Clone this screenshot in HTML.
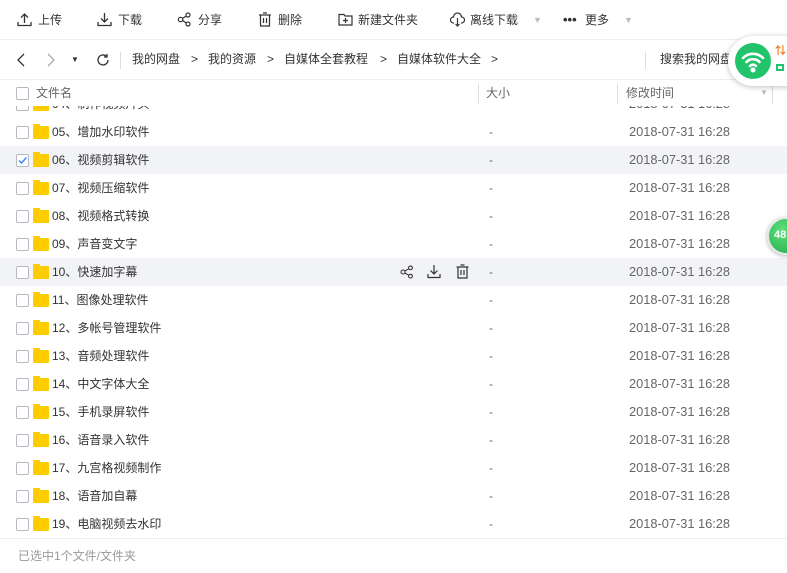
<!DOCTYPE html>
<html><head><meta charset="utf-8"><style>
*{margin:0;padding:0;box-sizing:border-box}
body{width:787px;height:572px;overflow:hidden;background:#fff;font-family:"Liberation Sans","Noto Sans CJK SC",sans-serif;font-size:12px;color:#424e67;position:relative}
.tb{position:absolute;top:0;left:0;width:787px;height:40px;border-bottom:1px solid #eceef2}
.tb span{position:absolute;top:0;font-size:12px;color:#333;line-height:40px}
.tb svg{position:absolute;top:12px}
.nav{position:absolute;top:40px;left:0;width:787px;height:40px;border-bottom:1px solid #eceef2}
.nav .t{position:absolute;top:0;line-height:39px;color:#333;font-size:12px}
.hd{position:absolute;top:80px;left:0;width:787px;height:26px}
.hd .t{position:absolute;top:0;line-height:26px;color:#666;font-size:12px}
.sep{position:absolute;width:1px;background:#ddd}
.cb{position:absolute;width:13px;height:13px;border:1px solid #b6b9bf;border-radius:2px;background:#fff}
.list{position:absolute;top:104px;left:0;width:787px;height:434px;overflow:hidden}
.row{position:absolute;left:0;width:787px;height:28px}
.row.hl{background:#f2f3f7}
.fold{position:absolute;left:33px;top:8px;width:16px;height:13px;background:#ffcc00;border-radius:1px}
.fold:before{content:"";position:absolute;left:0;top:-2px;width:7px;height:3px;background:#ffcc00;border-radius:1px 1px 0 0}
.nm,.sz,.dt{position:absolute;top:0;line-height:28px}
.nm{left:52px;color:#333}
.sz{left:489px;color:#666}
.dt{left:629px;color:#666;font-size:12.8px}
.ft{position:absolute;top:538px;left:0;width:787px;height:34px;border-top:1px solid #eceef2}
</style></head><body>
<div class="tb">
<svg style="left:17px" width="15" height="15" viewBox="0 0 15 15" fill="none" stroke="#333" stroke-width="1.3"><path d="M1 10v3.5h13V10M7.5 11V2M4 5.5l3.5-3.5 3.5 3.5"/></svg><span style="left:38px">上传</span>
<svg style="left:97px" width="15" height="15" viewBox="0 0 15 15" fill="none" stroke="#333" stroke-width="1.3"><path d="M1 10v3.5h13V10M7.5 1v9M4 6.5l3.5 3.5 3.5-3.5"/></svg><span style="left:118px">下载</span>
<svg style="left:177px" width="15" height="15" viewBox="0 0 15 15" fill="none" stroke="#333" stroke-width="1.2"><circle cx="3.5" cy="7.5" r="2.2"/><circle cx="11" cy="3" r="2"/><circle cx="11" cy="12" r="2"/><path d="M5.5 6.5l3.7-2.5M5.5 8.5l3.7 2.5"/></svg><span style="left:198px">分享</span>
<svg style="left:258px" width="14" height="15" viewBox="0 0 14 15" fill="none" stroke="#333" stroke-width="1.2"><path d="M1 3h12M5 1h4M2.5 3v11h9V3M5.5 6v5M8.5 6v5"/></svg><span style="left:278px">删除</span>
<svg style="left:338px" width="15" height="15" viewBox="0 0 15 15" fill="none" stroke="#333" stroke-width="1.2"><path d="M1 2.5h5l1 1.5h7v9H1zM7.5 6v5M5 8.5h5"/></svg><span style="left:358px">新建文件夹</span>
<svg style="left:450px" width="15" height="15" viewBox="0 0 15 15" fill="none" stroke="#333" stroke-width="1.2"><path d="M4 11H3.5a3 3 0 0 1 0-6 4 4 0 0 1 8 0 3 3 0 0 1 0 6H11M7.5 6v8M5.5 12l2 2 2-2"/></svg><span style="left:470px">离线下载</span>
<span style="left:533px;color:#bbb;font-size:9px">▼</span>
<span style="left:563px;font-weight:bold;font-size:13px">•••</span><span style="left:585px">更多</span>
<span style="left:624px;color:#bbb;font-size:9px">▼</span>
</div>
<div class="nav">
<svg style="position:absolute;left:16px;top:13px" width="10" height="14" viewBox="0 0 10 14" fill="none" stroke="#333" stroke-width="1.3"><path d="M8 1L2 7l6 6"/></svg>
<svg style="position:absolute;left:46px;top:13px" width="10" height="14" viewBox="0 0 10 14" fill="none" stroke="#aaa" stroke-width="1.3"><path d="M2 1l6 6-6 6"/></svg>
<span class="t" style="left:71px;font-size:8px">▼</span>
<svg style="position:absolute;left:96px;top:13px" width="14" height="14" viewBox="0 0 14 14" fill="none" stroke="#333" stroke-width="1.3"><path d="M12 7a5 5 0 1 1-1.5-3.6M11 1v3h-3"/></svg>
<div class="sep" style="left:120px;top:12px;height:17px"></div>
<span class="t" style="left:132px">我的网盘</span><span class="t" style="left:191px">&gt;</span>
<span class="t" style="left:208px">我的资源</span><span class="t" style="left:267px">&gt;</span>
<span class="t" style="left:284px">自媒体全套教程</span><span class="t" style="left:380px">&gt;</span>
<span class="t" style="left:397px">自媒体软件大全</span><span class="t" style="left:491px">&gt;</span>
<div class="sep" style="left:645px;top:12px;height:17px"></div>
<span class="t" style="left:660px">搜索我的网盘</span>
</div>
<div class="hd">
<div class="cb" style="left:16px;top:7px"></div>
<span class="t" style="left:36px">文件名</span>
<div class="sep" style="left:478px;top:4px;height:20px"></div>
<span class="t" style="left:486px">大小</span>
<div class="sep" style="left:617px;top:4px;height:20px"></div>
<span class="t" style="left:626px">修改时间</span>
<span class="t" style="left:760px;color:#bbb;font-size:8px">▼</span>
<div class="sep" style="left:772px;top:4px;height:20px"></div>
</div>
<div class="list" style="top:106px">
<div class="row" style="top:-16px"><div class="cb" style="left:16px;top:8px"></div><div class="fold"></div><span class="nm">04、制作视频片头</span><span class="sz">-</span><span class="dt">2018-07-31 16:28</span></div>
<div class="row" style="top:12px"><div class="cb" style="left:16px;top:8px"></div><div class="fold"></div><span class="nm">05、增加水印软件</span><span class="sz">-</span><span class="dt">2018-07-31 16:28</span></div>
<div class="row hl" style="top:40px"><div class="cb" style="left:16px;top:8px"><svg width="11" height="11" viewBox="0 0 11 11" style="position:absolute;left:0;top:0" fill="none" stroke="#3b8cff" stroke-width="1.5"><path d="M2 5.5l2.5 2.5 5-5.5"/></svg></div><div class="fold"></div><span class="nm">06、视频剪辑软件</span><span class="sz">-</span><span class="dt">2018-07-31 16:28</span></div>
<div class="row" style="top:68px"><div class="cb" style="left:16px;top:8px"></div><div class="fold"></div><span class="nm">07、视频压缩软件</span><span class="sz">-</span><span class="dt">2018-07-31 16:28</span></div>
<div class="row" style="top:96px"><div class="cb" style="left:16px;top:8px"></div><div class="fold"></div><span class="nm">08、视频格式转换</span><span class="sz">-</span><span class="dt">2018-07-31 16:28</span></div>
<div class="row" style="top:124px"><div class="cb" style="left:16px;top:8px"></div><div class="fold"></div><span class="nm">09、声音变文字</span><span class="sz">-</span><span class="dt">2018-07-31 16:28</span></div>
<div class="row hl" style="top:152px"><div class="cb" style="left:16px;top:8px"></div><div class="fold"></div><span class="nm">10、快速加字幕</span><span class="sz">-</span><span class="dt">2018-07-31 16:28</span>
<svg style="position:absolute;left:400px;top:7px" width="14" height="14" viewBox="0 0 14 14" fill="none" stroke="#333" stroke-width="1.1"><circle cx="3" cy="7" r="2"/><circle cx="10.5" cy="2.8" r="1.9"/><circle cx="10.5" cy="11.2" r="1.9"/><path d="M4.8 6l4-2.2M4.8 8l4 2.2"/></svg>
<svg style="position:absolute;left:427px;top:6px" width="14" height="15" viewBox="0 0 14 15" fill="none" stroke="#333" stroke-width="1.2"><path d="M1 10v3.5h12V10M7 1v9M3.5 6.5L7 10l3.5-3.5"/></svg>
<svg style="position:absolute;left:456px;top:6px" width="13" height="15" viewBox="0 0 13 15" fill="none" stroke="#333" stroke-width="1.2"><path d="M0.5 3h12M4.5 1h4M2 3v11h9V3M5 6v5M8 6v5"/></svg>
</div>
<div class="row" style="top:180px"><div class="cb" style="left:16px;top:8px"></div><div class="fold"></div><span class="nm">11、图像处理软件</span><span class="sz">-</span><span class="dt">2018-07-31 16:28</span></div>
<div class="row" style="top:208px"><div class="cb" style="left:16px;top:8px"></div><div class="fold"></div><span class="nm">12、多帐号管理软件</span><span class="sz">-</span><span class="dt">2018-07-31 16:28</span></div>
<div class="row" style="top:236px"><div class="cb" style="left:16px;top:8px"></div><div class="fold"></div><span class="nm">13、音频处理软件</span><span class="sz">-</span><span class="dt">2018-07-31 16:28</span></div>
<div class="row" style="top:264px"><div class="cb" style="left:16px;top:8px"></div><div class="fold"></div><span class="nm">14、中文字体大全</span><span class="sz">-</span><span class="dt">2018-07-31 16:28</span></div>
<div class="row" style="top:292px"><div class="cb" style="left:16px;top:8px"></div><div class="fold"></div><span class="nm">15、手机录屏软件</span><span class="sz">-</span><span class="dt">2018-07-31 16:28</span></div>
<div class="row" style="top:320px"><div class="cb" style="left:16px;top:8px"></div><div class="fold"></div><span class="nm">16、语音录入软件</span><span class="sz">-</span><span class="dt">2018-07-31 16:28</span></div>
<div class="row" style="top:348px"><div class="cb" style="left:16px;top:8px"></div><div class="fold"></div><span class="nm">17、九宫格视频制作</span><span class="sz">-</span><span class="dt">2018-07-31 16:28</span></div>
<div class="row" style="top:376px"><div class="cb" style="left:16px;top:8px"></div><div class="fold"></div><span class="nm">18、语音加自幕</span><span class="sz">-</span><span class="dt">2018-07-31 16:28</span></div>
<div class="row" style="top:404px"><div class="cb" style="left:16px;top:8px"></div><div class="fold"></div><span class="nm">19、电脑视频去水印</span><span class="sz">-</span><span class="dt">2018-07-31 16:28</span></div>
</div>
<div class="ft"><span style="position:absolute;left:18px;top:0;line-height:34px;color:#999">已选中1个文件/文件夹</span></div>
<div style="position:absolute;left:728px;top:36px;width:90px;height:50px;border-radius:25px;background:#fff;box-shadow:0 1px 6px rgba(0,0,0,.25)">
<div style="position:absolute;left:7px;top:7px;width:36px;height:36px;border-radius:50%;background:#22c46b">
<svg width="36" height="36" viewBox="0 0 36 36" fill="none" stroke="#fff" stroke-width="2.6" stroke-linecap="round"><path d="M8 15a14 14 0 0 1 20 0M11.5 19a9 9 0 0 1 13 0M15 23a4 4 0 0 1 6 0"/><circle cx="18" cy="27" r="1.2" fill="#fff"/></svg></div>
<span style="position:absolute;left:47px;top:6px;color:#f07b1e;font-size:11px;font-weight:bold">⇅</span>
<div style="position:absolute;left:48px;top:28px;width:8px;height:7px;border:2px solid #22c46b"></div>
</div>
<div style="position:absolute;left:767px;top:217px;width:38px;height:38px;border-radius:50%;background:radial-gradient(circle at 40% 35%,#5fe07a,#1ea84a);border:2px solid #e8e8e8;box-shadow:0 1px 4px rgba(0,0,0,.3)"><span style="position:absolute;left:5px;top:10px;color:#fff;font-size:11px;font-weight:bold">48</span></div>
</body></html>
